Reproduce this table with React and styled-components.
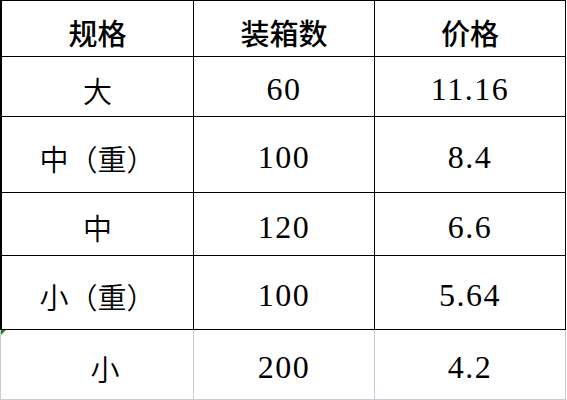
import React from "react";
import styled, { createGlobalStyle, css } from "styled-components";

const GlobalStyle = createGlobalStyle`
  html, body {
    margin: 0;
    padding: 0;
    background: #ffffff;
  }
`;

const LINE = "#000000";
const GRID = "#c6cbd8";

const Sheet = styled.div`
  display: grid;
  grid-template-columns: 194px 181px 191px;
  grid-template-rows: 56px 60px 76px 63px 74px 70px;
  border-top: 1px solid ${LINE};
  width: 566px;
  font-family: "Liberation Serif", "Noto Sans CJK SC", serif;
  color: #000;
`;

const Cell = styled.div`
  position: relative;
  box-sizing: border-box;
  display: flex;
  align-items: center;
  justify-content: center;
  padding-top: 6px;
  padding-left: ${(p) => p.$shift || 0}px;
  border-right: 1px solid ${(p) => (p.$loose ? GRID : LINE)};
  border-bottom: 1px solid ${(p) => (p.$loose ? GRID : LINE)};
  font-size: ${(p) => (p.$num ? "32px" : "29px")};
  letter-spacing: ${(p) => (p.$num ? "1.5px" : "0")};
  font-weight: ${(p) => (p.$head ? 500 : 350)};
  white-space: nowrap;
  ${(p) =>
    p.$first &&
    css`
      border-left: ${p.$loose ? `1px solid ${GRID}` : `2px solid ${LINE}`};
    `}
`;

const Marker = styled.span`
  position: absolute;
  top: 0;
  left: 0;
  width: 0;
  height: 0;
  border-top: 5px solid #1e8a2e;
  border-right: 5px solid transparent;
`;

const rows = [
  ["大", "60", "11.16"],
  ["中（重）", "100", "8.4"],
  ["中", "120", "6.6"],
  ["小（重）", "100", "5.64"],
  ["小", "200", "4.2"],
];

export default function App() {
  return (
    <>
      <GlobalStyle />
      <Sheet>
        <Cell $first $head>规格</Cell>
        <Cell $head>装箱数</Cell>
        <Cell $head>价格</Cell>
        {rows.map((r, i) => {
          const loose = i === rows.length - 1;
          return (
            <React.Fragment key={i}>
              <Cell $first $loose={loose} $shift={loose ? 16 : 0}>
                {loose && <Marker />}
                {r[0]}
              </Cell>
              <Cell $num $loose={loose}>{r[1]}</Cell>
              <Cell $num $loose={loose}>{r[2]}</Cell>
            </React.Fragment>
          );
        })}
      </Sheet>
    </>
  );
}
